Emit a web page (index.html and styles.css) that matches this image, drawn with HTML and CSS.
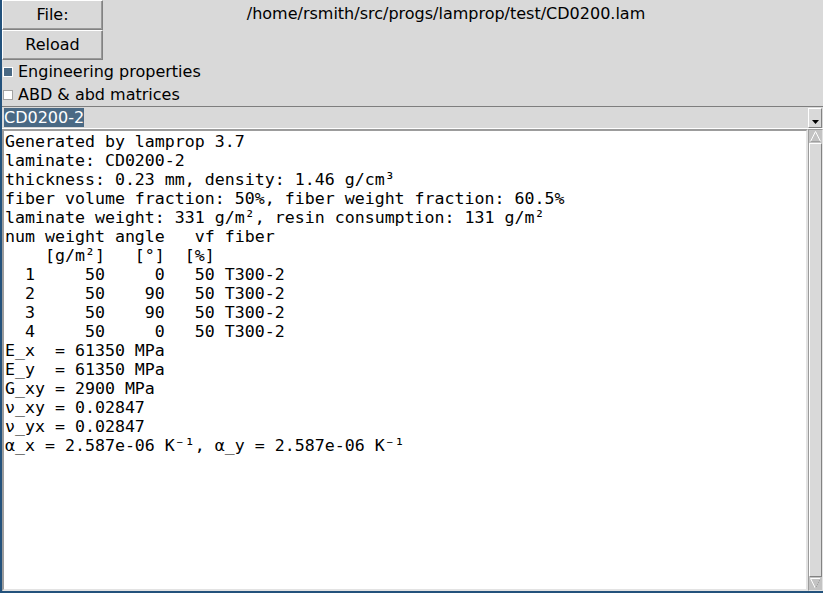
FILE: index.html
```html
<!DOCTYPE html>
<html>
<head>
<meta charset="utf-8">
<link rel="stylesheet" href="styles.css">
</head>
<body>
<div class="app">
  <div class="top">
    <div class="buttons">
      <div class="btn">File:</div>
      <div class="btn">Reload</div>
    </div>
    <div class="path">/home/rsmith/src/progs/lamprop/test/CD0200.lam</div>
  </div>
  <div class="check"><span class="ind on"></span>Engineering properties</div>
  <div class="check"><span class="ind"></span>ABD &amp; abd matrices</div>
  <div class="combo">
    <span class="sel">CD0200-2</span>
    <span class="arrow"><svg width="7" height="4" viewBox="0 0 7 4"><path d="M0 0H7L3.5 4Z" fill="#000"/></svg></span>
  </div>
  <div class="main">
<pre class="text">Generated by lamprop 3.7
laminate: CD0200-2
thickness: 0.23 mm, density: 1.46 g/cm³
fiber volume fraction: 50%, fiber weight fraction: 60.5%
laminate weight: 331 g/m², resin consumption: 131 g/m²
num weight angle   vf fiber
    [g/m²]   [°]  [%]
  1     50     0   50 T300-2
  2     50    90   50 T300-2
  3     50    90   50 T300-2
  4     50     0   50 T300-2
E_x  = 61350 MPa
E_y  = 61350 MPa
G_xy = 2900 MPa
ν_xy = 0.02847
ν_yx = 0.02847
α_x = 2.587e-06 K⁻¹, α_y = 2.587e-06 K⁻¹</pre>
    <div class="sb">
      <div class="sbarrow"><svg width="13" height="13" viewBox="0 0 13 13"><path d="M1.5 11.5H11.5L6.5 1.5Z" fill="none" stroke="#ffffff" stroke-width="1"/><path d="M1.5 11.5H11.5" stroke="#a0a0a0"/></svg></div>
      <div class="slider"></div>
      <div class="sbarrow"><svg width="13" height="13" viewBox="0 0 13 13"><path d="M1.5 1.5H11.5L6.5 11.5Z" fill="none" stroke="#ffffff" stroke-width="1"/><path d="M11.5 1.5L6.5 11.5" stroke="#a0a0a0"/></svg></div>
    </div>
  </div>
</div>
</body>
</html>
```
FILE: styles.css
```css
html, body {
  margin: 0;
  padding: 0;
}
body {
  background: #23527c;
  width: 823px;
  height: 593px;
  overflow: hidden;
}
.app {
  margin-left: 2px;
  width: 821px;
  height: 591px;
  background: #d9d9d9;
  display: flex;
  flex-direction: column;
  font-family: "DejaVu Sans", sans-serif;
  font-size: 16px;
  color: #000;
}
.top {
  display: flex;
  height: 60px;
}
.buttons {
  display: flex;
  flex-direction: column;
  width: 101px;
}
.btn {
  box-sizing: border-box;
  height: 30px;
  border: 1px solid;
  border-color: #ffffff #828282 #828282 #ffffff;
  box-shadow: inset -1px -1px 0 #9a9a9a;
  display: flex;
  align-items: center;
  justify-content: center;
  padding-bottom: 1px;
}
.path {
  flex: 1;
  text-align: center;
  padding-right: 34px;
  line-height: 28px;
}
.check {
  height: 23px;
  display: flex;
  align-items: center;
  padding-left: 1px;
}
.ind {
  box-sizing: border-box;
  width: 10px;
  height: 10px;
  margin-right: 5px;
  background: #ffffff;
  border: 1px solid #a3a3a3;
}
.ind.on {
  background: #4a6984;
  border-color: #ffffff;
}
.combo {
  box-sizing: border-box;
  height: 23px;
  border-top: 1px solid #7e7e7e;
  border-bottom: 1px solid #ffffff;
  display: flex;
  align-items: flex-start;
  padding: 1px 1px 0 2px;
}
.sel {
  background: #4a6984;
  color: #ffffff;
  padding: 0 0 0 0;
  line-height: 19px;
  height: 19px;
}
.arrow {
  margin-left: auto;
  width: 14px;
  height: 20px;
  box-sizing: border-box;
  border: 1px solid;
  border-color: #ffffff #828282 #828282 #ffffff;
  display: flex;
  align-items: flex-end;
  justify-content: center;
  padding-bottom: 3px;
}
.main {
  flex: 1;
  display: flex;
  min-height: 0;
}
.text {
  flex: 1;
  margin: 0;
  background: #ffffff;
  box-sizing: border-box;
  border: 2px solid;
  border-color: #9c9c9c #e3e3e3 #e3e3e3 #9c9c9c;
  padding: 1px 0 0 1px;
  font-family: "DejaVu Sans Mono", monospace;
  font-size: 16.6px;
  line-height: 19px;
  color: #000;
  overflow: hidden;
}
.sb {
  width: 15px;
  display: flex;
  flex-direction: column;
  box-sizing: border-box;
  border: 1px solid;
  border-color: #9c9c9c #e3e3e3 #e3e3e3 #9c9c9c;
}
.sbarrow {
  height: 13px;
  box-sizing: border-box;
  background: #c3c3c3;
  display: flex;
  align-items: center;
  justify-content: center;
}
.slider {
  flex: 1;
  box-sizing: border-box;
  border: 1px solid;
  border-color: #ffffff #828282 #828282 #ffffff;
  background: #d9d9d9;
}
```
